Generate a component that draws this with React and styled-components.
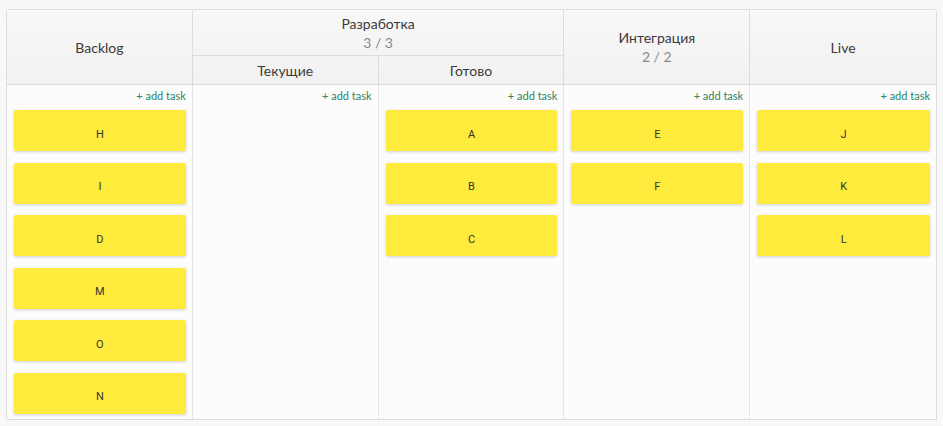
import React from "react";
import styled, { createGlobalStyle } from "styled-components";

const GlobalStyle = createGlobalStyle`
  html, body { margin: 0; padding: 0; background: #f8f8f8; }
  body { font-family: Lato, "Noto Sans", sans-serif; }
`;

const Page = styled.div`
  padding: 9px 0 0 6px;
`;

const Board = styled.div`
  width: 931px;
  box-sizing: border-box;
  border: 1px solid #dcdcdc;
  border-radius: 3px 3px 0 0;
  background: #fcfcfc;
`;

const Head = styled.div`
  display: grid;
  grid-template-columns: repeat(5, 1fr);
  grid-template-rows: 46px 28px;
  background: linear-gradient(#f8f8f8, #f1f1f1);
  border-bottom: 1px solid #dcdcdc;
`;

const HeadCell = styled.div`
  grid-column: ${(p) => p.$col};
  grid-row: ${(p) => p.$row};
  display: flex;
  flex-direction: column;
  align-items: center;
  justify-content: center;
  border-right: ${(p) => (p.$last ? "none" : "1px solid #dcdcdc")};
  border-bottom: ${(p) => (p.$split ? "1px solid #dcdcdc" : "none")};
  color: #3a3a3a;
  font-size: 14px;
  line-height: 17px;
  padding-top: ${(p) => p.$pt || 0}px;
`;

const Count = styled.span`
  color: #888;
  font-size: 14px;
  margin-top: 2px;
`;

const Body = styled.div`
  display: grid;
  grid-template-columns: repeat(5, 1fr);
  height: 334px;
`;

const Column = styled.div`
  display: flex;
  flex-direction: column;
  padding: 4px 6px 0 7px;
  border-right: ${(p) => (p.$last ? "none" : "1px dotted #cfcfcf")};
`;

const AddTask = styled.a`
  align-self: flex-end;
  color: #2b8462;
  font-size: 11px;
  line-height: 14px;
  margin-bottom: 7px;
  cursor: pointer;
`;

const Card = styled.div`
  height: 41px;
  box-sizing: border-box;
  margin-bottom: 11.6px;
  padding-top: 7px;
  background: #ffeb3b;
  border-radius: 2px;
  box-shadow: 0 1px 3px rgba(0, 0, 0, 0.18);
  display: flex;
  align-items: center;
  justify-content: center;
  font-family: Roboto, "Liberation Sans", sans-serif;
  font-size: 11px;
  color: #333;
`;

const columns = [
  ["H", "I", "D", "M", "O", "N"],
  [],
  ["A", "B", "C"],
  ["E", "F"],
  ["J", "K", "L"],
];

export default function App() {
  return (
    <>
      <GlobalStyle />
      <Page>
        <Board>
          <Head>
            <HeadCell $col="1" $row="1 / 3">Backlog</HeadCell>
            <HeadCell $col="2 / 4" $row="1" $split>
              Разработка
              <Count>3 / 3</Count>
            </HeadCell>
            <HeadCell $col="2" $row="2">Текущие</HeadCell>
            <HeadCell $col="3" $row="2">Готово</HeadCell>
            <HeadCell $col="4" $row="1 / 3">
              Интеграция
              <Count>2 / 2</Count>
            </HeadCell>
            <HeadCell $col="5" $row="1 / 3" $last>Live</HeadCell>
          </Head>
          <Body>
            {columns.map((cards, i) => (
              <Column key={i} $last={i === columns.length - 1}>
                <AddTask>+ add task</AddTask>
                {cards.map((c) => (
                  <Card key={c}>{c}</Card>
                ))}
              </Column>
            ))}
          </Body>
        </Board>
      </Page>
    </>
  );
}
